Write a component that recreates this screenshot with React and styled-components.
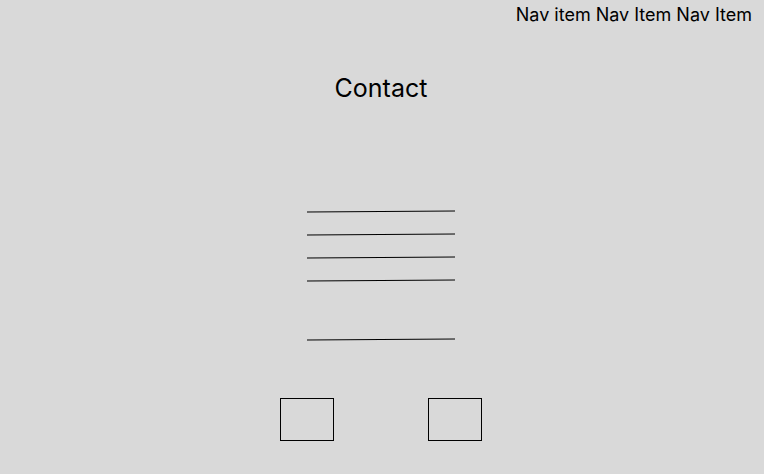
import React from 'react';
import styled, { createGlobalStyle } from 'styled-components';

const GlobalStyle = createGlobalStyle`
  html, body {
    margin: 0;
    padding: 0;
    background: #d9d9d9;
    font-family: Inter, "Liberation Sans", sans-serif;
    color: #000;
  }
`;

const Page = styled.div`
  width: 764px;
  height: 474px;
  background: #d9d9d9;
  display: flex;
  flex-direction: column;
`;

const Nav = styled.nav`
  display: flex;
  justify-content: flex-end;
  gap: 5px;
  padding: 4px 12px 0 0;
  font-size: 18px;
  line-height: 22px;
`;

const NavItem = styled.span``;

const Title = styled.h1`
  margin: 47px 0 0;
  padding-right: 2px;
  text-align: center;
  font-size: 25px;
  font-weight: 400;
  line-height: 30px;
`;

const Form = styled.div`
  display: flex;
  flex-direction: column;
  align-items: center;
  padding-right: 2px;
  margin-top: 108px;
`;

const Field = styled.div`
  width: 148px;
  height: 1px;
  background: #000;
  transform: rotate(-0.39deg);
  margin-top: ${(p) => p.$gap}px;
`;

const Buttons = styled.div`
  display: flex;
  justify-content: center;
  gap: 94px;
  padding-right: 2px;
  margin-top: 58px;
`;

const Box = styled.div`
  width: 52px;
  height: 41px;
  border: 1px solid #000;
`;

export default function App() {
  return (
    <Page>
      <GlobalStyle />
      <Nav>
        <NavItem>Nav item</NavItem>
        <NavItem>Nav Item</NavItem>
        <NavItem>Nav Item</NavItem>
      </Nav>
      <Title>Contact</Title>
      <Form>
        <Field $gap={0} />
        <Field $gap={22} />
        <Field $gap={22} />
        <Field $gap={22} />
        <Field $gap={58} />
      </Form>
      <Buttons>
        <Box />
        <Box />
      </Buttons>
    </Page>
  );
}
